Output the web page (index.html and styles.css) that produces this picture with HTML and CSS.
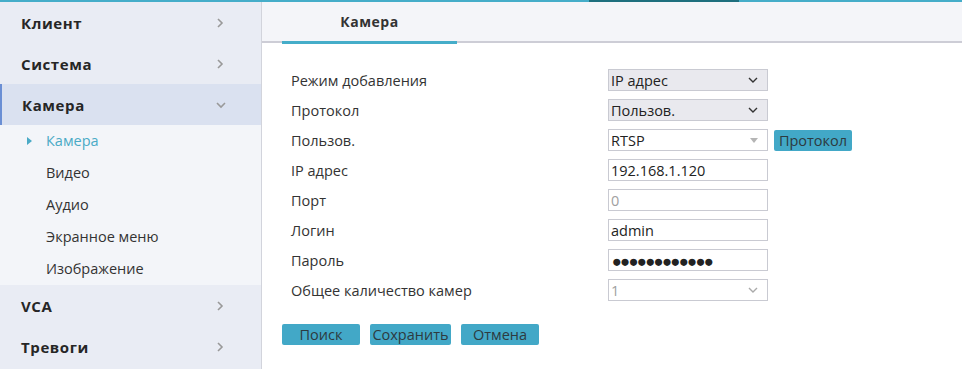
FILE: index.html
```html
<!DOCTYPE html>
<html lang="ru">

<head>
    <meta charset="UTF-8">
    <meta name="viewport" content="width=device-width, initial-scale=1.0">
    <title>Камера</title>
    <link rel="stylesheet" href="styles.css">
</head>

<body>
    <div class="topline"><span class="topline-mark"></span></div>
    <div class="layout">
        <aside class="menu">
            <div class="menu-head">Клиент
                <svg class="chev" width="8" height="10" viewBox="0 0 8 10"><polyline points="2,1 6,5 2,9" /></svg>
            </div>
            <div class="menu-head">Система
                <svg class="chev" width="8" height="10" viewBox="0 0 8 10"><polyline points="2,1 6,5 2,9" /></svg>
            </div>
            <div class="menu-head open">Камера
                <svg class="chev" width="10" height="8" viewBox="0 0 10 8"><polyline points="1,2 5,6 9,2" /></svg>
            </div>
            <ul class="submenu">
                <li class="current">Камера</li>
                <li>Видео</li>
                <li>Аудио</li>
                <li>Экранное меню</li>
                <li>Изображение</li>
            </ul>
            <div class="menu-head">VCA
                <svg class="chev" width="8" height="10" viewBox="0 0 8 10"><polyline points="2,1 6,5 2,9" /></svg>
            </div>
            <div class="menu-head">Тревоги
                <svg class="chev" width="8" height="10" viewBox="0 0 8 10"><polyline points="2,1 6,5 2,9" /></svg>
            </div>
        </aside>
        <main class="content">
            <nav class="tabs">
                <span class="tab active">Камера</span>
            </nav>
            <form class="form">
                <div class="row">
                    <label>Режим добавления</label>
                    <div class="field select"><span>IP адрес</span>
                        <svg width="10" height="6" viewBox="0 0 10 6"><polyline points="1,1 5,5 9,1" /></svg>
                    </div>
                </div>
                <div class="row">
                    <label>Протокол</label>
                    <div class="field select"><span>Пользов.</span>
                        <svg width="10" height="6" viewBox="0 0 10 6"><polyline points="1,1 5,5 9,1" /></svg>
                    </div>
                </div>
                <div class="row">
                    <label>Пользов.</label>
                    <div class="field combo"><span>RTSP</span>
                        <svg width="8" height="5" viewBox="0 0 8 5"><polygon points="0,0 8,0 4,5" /></svg>
                    </div>
                    <button type="button" class="btn btn-small">Протокол</button>
                </div>
                <div class="row">
                    <label>IP адрес</label>
                    <div class="field"><span>192.168.1.120</span></div>
                </div>
                <div class="row">
                    <label>Порт</label>
                    <div class="field muted"><span>0</span></div>
                </div>
                <div class="row">
                    <label>Логин</label>
                    <div class="field"><span>admin</span></div>
                </div>
                <div class="row">
                    <label>Пароль</label>
                    <div class="field"><span class="dots">●●●●●●●●●●●●</span></div>
                </div>
                <div class="row">
                    <label>Общее каличество камер</label>
                    <div class="field muted disabled"><span>1</span>
                        <svg width="10" height="6" viewBox="0 0 10 6"><polyline points="1,1 5,5 9,1" /></svg>
                    </div>
                </div>
                <div class="actions">
                    <button type="button" class="btn">Поиск</button>
                    <button type="button" class="btn">Сохранить</button>
                    <button type="button" class="btn">Отмена</button>
                </div>
            </form>
        </main>
    </div>
</body>

</html>
```

FILE: styles.css
```css
body {
    margin: 0;
    font-family: "Open Sans", "Noto Sans", sans-serif;
    color: #333;
    background-color: white;
    overflow: hidden;
}

.topline {
    height: 2px;
    background-color: #45adc9;
    display: flex;
}

.topline-mark {
    margin-left: 589px;
    width: 150px;
    background-color: #1e6f7e;
}

.layout {
    display: flex;
    height: 367px;
}

.menu {
    width: 261px;
    background-color: #e9ecf4;
    border-right: 1px solid #d2d4dc;
    flex-shrink: 0;
}

.menu-head {
    height: 41px;
    display: flex;
    align-items: center;
    justify-content: space-between;
    padding: 0 37px 0 21px;
    font-size: 15px;
    font-weight: bold;
    letter-spacing: 0.6px;
    color: #262626;
}

.menu-head.open {
    background-color: #dae1f0;
    border-left: 2px solid #6b8fd4;
    padding-left: 20px;
    padding-right: 35px;
}

.chev {
    fill: none;
    stroke: #999;
    stroke-width: 1.6;
}

.submenu {
    list-style: none;
    margin: 0;
    padding: 0;
    background-color: #f3f5f9;
    height: 160px;
}

.submenu li {
    height: 32px;
    line-height: 32px;
    padding-left: 46px;
    font-size: 14.5px;
    color: #333;
    position: relative;
}

.submenu li.current {
    color: #4aaac6;
}

.submenu li.current::before {
    content: "";
    position: absolute;
    left: 27px;
    top: 12px;
    border-left: 5px solid #4aaac6;
    border-top: 4px solid transparent;
    border-bottom: 4px solid transparent;
}

.content {
    flex: 1;
}

.tabs {
    height: 39px;
    background-color: #f4f5f9;
    border-bottom: 2px solid #cdcdd6;
    padding-left: 20px;
    display: flex;
}

.tab {
    width: 175px;
    text-align: center;
    line-height: 39px;
    font-size: 14px;
    font-weight: bold;
    letter-spacing: 0.5px;
    color: #333;
}

.tab.active {
    border-bottom: 3px solid #45adc9;
    margin-bottom: -2px;
    box-sizing: border-box;
    height: 42px;
}

.form {
    padding: 22px 0 0 29px;
}

.row {
    display: flex;
    align-items: center;
    height: 30px;
    font-size: 14.5px;
}

.row label {
    width: 317px;
    flex-shrink: 0;
}

.field {
    height: 20px;
    border: 1px solid #c9cad2;
    display: flex;
    align-items: center;
    justify-content: space-between;
    padding: 0 9px 0 2px;
    width: 147px;
    font-size: 14.5px;
    color: #222;
    background-color: white;
}

.field svg {
    fill: none;
    stroke: #333;
    stroke-width: 1.4;
}

.field.select {
    background-color: #e9e9ee;
}

.field.combo svg {
    fill: #b5b5b5;
    stroke: none;
}

.field.muted {
    color: #a0a0a0;
}

.field.disabled svg {
    stroke: #aaa;
}

.dots {
    font-size: 16.5px;
    letter-spacing: -1.6px;
    color: #222;
    margin-left: 1px;
}

.btn {
    font-family: inherit;
    font-size: 14.5px;
    color: #2d3a40;
    background-color: #42a8c7;
    border: none;
    border-radius: 2px;
    height: 21px;
    padding: 0;
    line-height: 21px;
}

.btn-small {
    margin-left: 6px;
    width: 78px;
}

.actions {
    display: flex;
    gap: 10px;
    margin: 19px 0 0 -9px;
}

.actions .btn {
    width: 78px;
}

.actions .btn:nth-child(2) {
    width: 81px;
}
```
